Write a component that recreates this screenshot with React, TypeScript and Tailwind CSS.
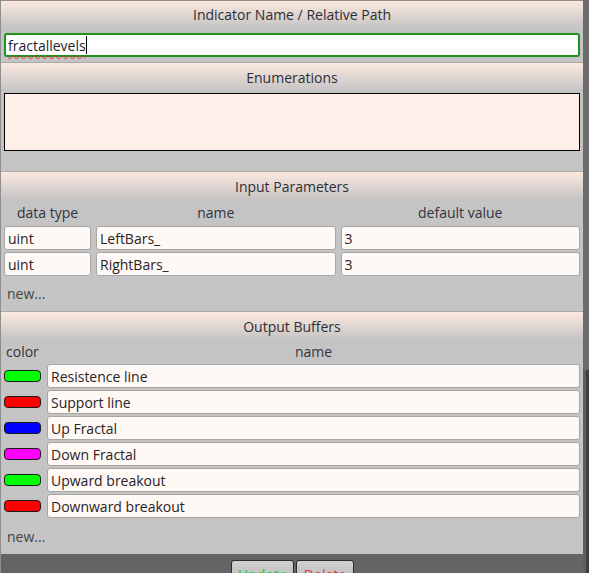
import React from 'react';

const font = { fontFamily: '"Open Sans", "Noto Sans", sans-serif' };

const SectionHeader = ({ title, first }: { title: string; first?: boolean }) => (
    <div
        className={
            'flex items-center justify-center text-[14px] text-[#2e2e36] bg-linear-to-b from-[#fce9df] to-[#c4c4c4] ' +
            (first ? 'h-[27px]' : 'h-[29px] border-t border-[#a9a9a9]')
        }
    >
        {title}
    </div>
);

const Field = ({ value }: { value: string }) => (
    <div className="h-[24px] flex items-center px-[3px] text-[14px] text-[#2a2226] bg-[#fef9f5] border border-[#a6a6a6] rounded-[3px]">
        {value}
    </div>
);

const params = [
    { type: 'uint', name: 'LeftBars_', value: '3' },
    { type: 'uint', name: 'RightBars_', value: '3' },
];

const buffers = [
    { color: 'bg-[#00ff00]', name: 'Resistence line' },
    { color: 'bg-[#ff0000]', name: 'Support line' },
    { color: 'bg-[#0000ff]', name: 'Up Fractal' },
    { color: 'bg-[#ff00ff]', name: 'Down Fractal' },
    { color: 'bg-[#00ff00]', name: 'Upward breakout' },
    { color: 'bg-[#ff0000]', name: 'Downward breakout' },
];

export default function App() {
    return (
        <div className="w-[589px] h-[573px] overflow-hidden flex bg-[#c4c4c4]" style={font}>
            <div className="w-[583px] shrink-0 border-t border-l border-[#8e8e8e] bg-[#c4c4c4]">
                {/* indicator name */}
                <SectionHeader title="Indicator Name / Relative Path" first />
                <div className="pl-[3px] pr-[3px] pt-[5px] pb-[5px]">
                    <div className="h-[24px] flex items-center px-[2px] bg-white border-2 border-[#1f911f] rounded-[3px] text-[14px] text-[#1e1e2a]">
                        <span className="underline decoration-wavy decoration-[#e03030] decoration-1 underline-offset-[4px]">
                            fractallevels
                        </span>
                        <span className="w-px h-[18px] bg-black" />
                    </div>
                </div>

                {/* enumerations */}
                <SectionHeader title="Enumerations" />
                <div className="pl-[3px] pr-[3px] pt-[2px] pb-[20px]">
                    <div className="h-[58px] bg-[#fef0e8] border border-black" />
                </div>

                {/* input parameters */}
                <SectionHeader title="Input Parameters" />
                <div className="pl-[3px] pr-[3px]">
                    <div className="grid grid-cols-[87px_1fr_1fr] gap-x-[5px] text-[14px] text-[#33333b]">
                        <div className="h-[24px] flex items-center justify-center">data type</div>
                        <div className="h-[24px] flex items-center justify-center">name</div>
                        <div className="h-[24px] flex items-center justify-center">default value</div>
                    </div>
                    <div className="mt-[2px] flex flex-col gap-[2px]">
                        {params.map((p) => (
                            <div key={p.name} className="grid grid-cols-[87px_1fr_1fr] gap-x-[5px]">
                                <Field value={p.type} />
                                <Field value={p.name} />
                                <Field value={p.value} />
                            </div>
                        ))}
                    </div>
                    <div className="h-[35px] flex items-center pl-[3px] text-[14px] text-[#444]">new...</div>
                </div>

                {/* output buffers */}
                <SectionHeader title="Output Buffers" />
                <div className="pl-[3px] pr-[3px]">
                    <div className="grid grid-cols-[37px_1fr] gap-x-[6px] text-[14px] text-[#33333b]">
                        <div className="h-[22px] flex items-center pl-[2px]">color</div>
                        <div className="h-[22px] flex items-center justify-center">name</div>
                    </div>
                    <div className="mt-[2px] flex flex-col gap-[2px]">
                        {buffers.map((b) => (
                            <div key={b.name} className="grid grid-cols-[37px_1fr] gap-x-[6px] items-center">
                                <div className={'h-[12px] rounded-[4px] border border-[#1a1a1a] ' + b.color} />
                                <Field value={b.name} />
                            </div>
                        ))}
                    </div>
                    <div className="h-[36px] flex items-center pl-[3px] text-[14px] text-[#444]">new...</div>
                </div>

                {/* footer */}
                <div className="h-[40px] bg-[#646464] flex justify-center gap-[2px] pt-[6px] pl-[1px]">
                    <button className="w-[63px] h-[26px] rounded-t-[3px] border border-[#2c2c2c] bg-linear-to-b from-[#d0d0d0] to-[#b8b8b8] text-[14px] font-semibold text-[#3ccc3c] flex items-start justify-center pt-[3px]">
                        Update
                    </button>
                    <button className="w-[58px] h-[26px] rounded-t-[3px] border border-[#2c2c2c] bg-linear-to-b from-[#d0d0d0] to-[#b8b8b8] text-[14px] text-[#e03a3a] flex items-start justify-center pt-[3px]">
                        Delete
                    </button>
                </div>
            </div>
            <div className="w-[6px] h-full flex flex-col">
                <div className="h-[370px] bg-[#6b6b6b]" />
                <div className="flex-1 flex">
                    <div className="w-[3px] bg-[#5e5e5e]" />
                    <div className="flex-1 bg-[#3e3e3e]" />
                </div>
            </div>
        </div>
    );
}
